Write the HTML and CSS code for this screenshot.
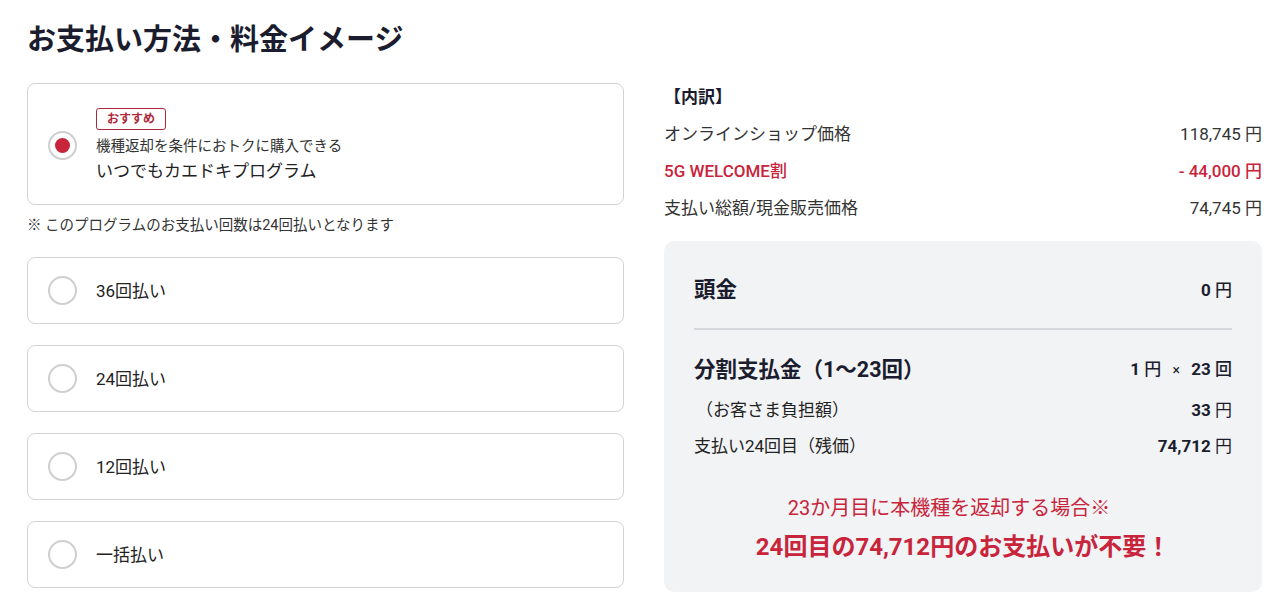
FILE: index.html
```html
<!DOCTYPE html>
<html lang="ja">
<head>
<meta charset="utf-8">
<link rel="stylesheet" href="styles.css">
</head>
<body>
<div class="page">
  <h1 class="title">お支払い方法・料金イメージ</h1>
  <div class="columns">
    <div class="left">
      <label class="card card-main">
        <span class="radio radio-on"></span>
        <span class="main-text">
          <span class="badge">おすすめ</span>
          <span class="sub">機種返却を条件におトクに購入できる</span>
          <span class="name">いつでもカエドキプログラム</span>
        </span>
      </label>
      <p class="note">※ このプログラムのお支払い回数は24回払いとなります</p>
      <label class="card"><span class="radio"></span><span class="opt">36回払い</span></label>
      <label class="card"><span class="radio"></span><span class="opt">24回払い</span></label>
      <label class="card"><span class="radio"></span><span class="opt">12回払い</span></label>
      <label class="card"><span class="radio"></span><span class="opt">一括払い</span></label>
    </div>
    <div class="right">
      <h2 class="breakdown">【内訳】</h2>
      <div class="row"><span>オンラインショップ価格</span><span>118,745 円</span></div>
      <div class="row red"><span>5G WELCOME割</span><span>- 44,000 円</span></div>
      <div class="row"><span>支払い総額/現金販売価格</span><span>74,745 円</span></div>
      <div class="box">
        <div class="brow big"><span>頭金</span><span class="num">0 <span class="unit">円</span></span></div>
        <hr class="divider">
        <div class="brow big"><span>分割支払金（1〜23回）</span><span class="num">1 <span class="unit">円</span> <span class="times">×</span> 23 <span class="unit">回</span></span></div>
        <div class="brow small1"><span>（お客さま負担額）</span><span class="num">33 <span class="unit">円</span></span></div>
        <div class="brow small2"><span>支払い24回目（残価）</span><span class="num">74,712 <span class="unit">円</span></span></div>
        <p class="msg1">23か月目に本機種を返却する場合※</p>
        <p class="msg2">24回目の74,712円のお支払いが不要！</p>
      </div>
    </div>
  </div>
</div>
</body>
</html>
```

FILE: styles.css
```css
* { box-sizing: border-box; }
body {
  margin: 0;
  background: #fff;
  font-family: Roboto, "Noto Sans CJK JP", sans-serif;
  color: #222;
}
.page { padding: 20px 18px 0 27px; }
.title {
  margin: 0;
  font-size: 29px;
  line-height: 40px;
  font-weight: 700;
  color: #1b1d2e;
}
.columns {
  display: grid;
  grid-template-columns: 597px 598px;
  column-gap: 40px;
  margin-top: 23px;
}
.card {
  display: flex;
  align-items: center;
  height: 67px;
  border: 1px solid #d3d3d3;
  border-radius: 8px;
  padding-left: 20px;
  margin-bottom: 21px;
  background: #fff;
}
.card-main {
  height: 122px;
  margin-bottom: 0;
}
.radio {
  width: 29px;
  height: 29px;
  border-radius: 50%;
  border: 2px solid #cfcfcf;
  flex: none;
  margin-right: 19px;
  display: flex;
  align-items: center;
  justify-content: center;
}
.radio-on { margin-top: 2px; }
.radio-on::after {
  content: "";
  width: 15px;
  height: 15px;
  border-radius: 50%;
  background: #c8243b;
}
.main-text {
  display: flex;
  flex-direction: column;
  align-items: flex-start;
  padding-top: 5px;
}
.badge {
  border: 1px solid #b0273b;
  color: #b0273b;
  border-radius: 3px;
  font-size: 12px;
  font-weight: 700;
  line-height: 20px;
  padding: 0 10px;
  margin-bottom: 7px;
}
.sub { font-size: 14.5px; line-height: 20px; color: #333; }
.name { font-size: 17px; line-height: 28px; color: #222; }
.opt { font-size: 17px; color: #222; margin-top: -2px; }
.note {
  margin: 10px 0 20px;
  font-size: 14.5px;
  line-height: 22px;
  color: #333;
}
.right { padding-top: 2px; }
.breakdown {
  margin: 0;
  font-size: 17px;
  font-weight: 700;
  line-height: 24px;
  color: #1b1d2e;
}
.row {
  display: flex;
  justify-content: space-between;
  font-size: 17px;
  line-height: 24px;
  margin-top: 13px;
  color: #333;
}
.row.red { color: #c8243b; font-weight: 500; }
.box {
  margin-top: 21px;
  background: #f2f3f5;
  border-radius: 10px;
  padding: 35px 30px 30px;
  height: 351px;
}
.brow {
  display: flex;
  justify-content: space-between;
  align-items: center;
  font-size: 17px;
  line-height: 24px;
  color: #222;
}
.brow.big { font-size: 21.5px; font-weight: 700; line-height: 28px; color: #1b1d2e; }
.num { font-size: 17px; font-weight: 700; color: #1b1d2e; }
.unit { font-weight: 400; }
.big .unit { font-weight: 500; }
.times { font-weight: 400; font-size: 14px; margin: 0 7px; }
.divider {
  border: none;
  border-top: 2px solid #d5d7dc;
  margin: 24px 0 25px;
}
.small1 { margin-top: 14px; padding-left: 2px; }
.small2 { margin-top: 12px; }
.msg1 {
  margin: 36px 0 0;
  padding-right: 28px;
  text-align: center;
  font-size: 20px;
  line-height: 28px;
  color: #c8243b;
}
.msg2 {
  margin: 9px 0 0;
  text-align: center;
  font-size: 24px;
  line-height: 32px;
  font-weight: 700;
  color: #c8243b;
}
```
